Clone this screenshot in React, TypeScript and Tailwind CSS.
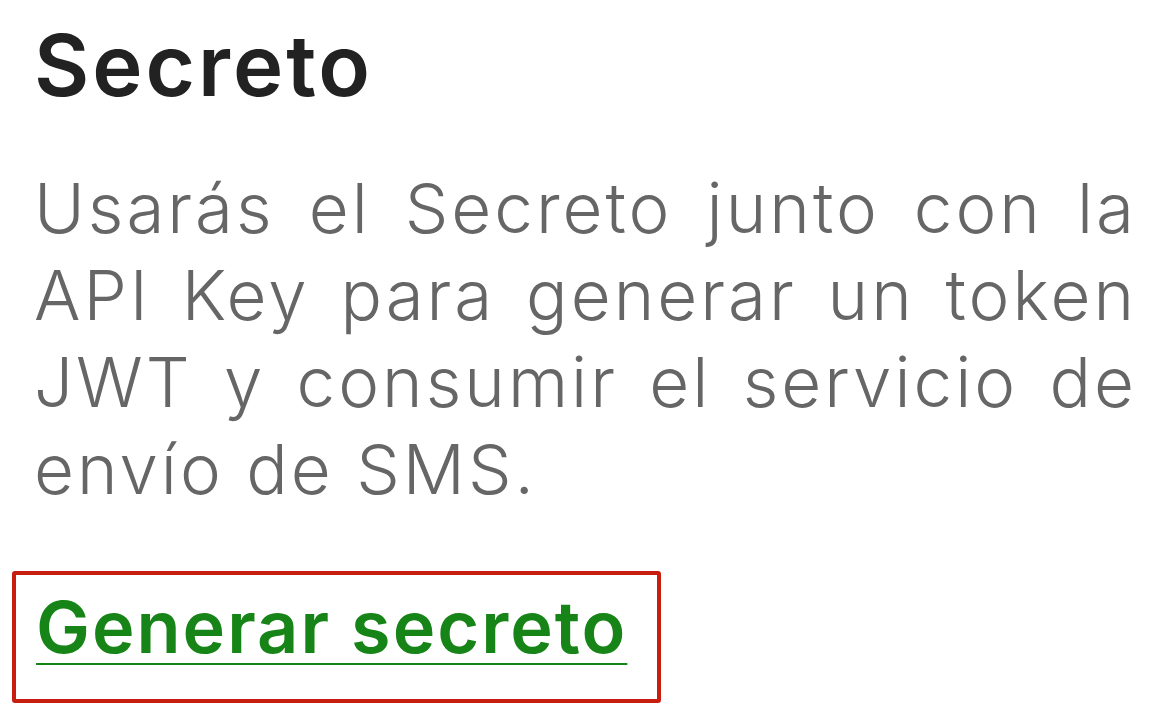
export default function App() {
  const lines = [
    "Usarás el Secreto junto con la",
    "API Key para generar un token",
    "JWT y consumir el servicio de",
  ];
  return (
    <div className="w-[1166px] h-[722px] bg-white overflow-hidden" style={{ fontFamily: "Inter, 'Noto Sans', sans-serif" }}>
      <div className="pl-[34px] pr-[29px]">
        <h1 className="text-[85px] leading-[100px] font-semibold text-[#222222] pt-[16px] tracking-[3px]">Secreto</h1>
        <div className="mt-[49px] text-[69px] leading-[87px] font-light text-[#666666] tracking-[3px]">
          {lines.map((l) => (
            <div key={l} className="text-justify [text-align-last:justify]">{l}</div>
          ))}
          <div>envío de SMS.</div>
        </div>
      </div>
      <div className="mt-[58px] ml-[12px] w-[649px] h-[132px] border-[4px] border-[#c81e0f] rounded-[3px] pl-[20px] pt-[7px]">
        <a className="text-[72px] leading-[90px] font-semibold text-[#178417] tracking-[2px] underline decoration-2 underline-offset-[10px]">Generar secreto</a>
      </div>
    </div>
  );
}
